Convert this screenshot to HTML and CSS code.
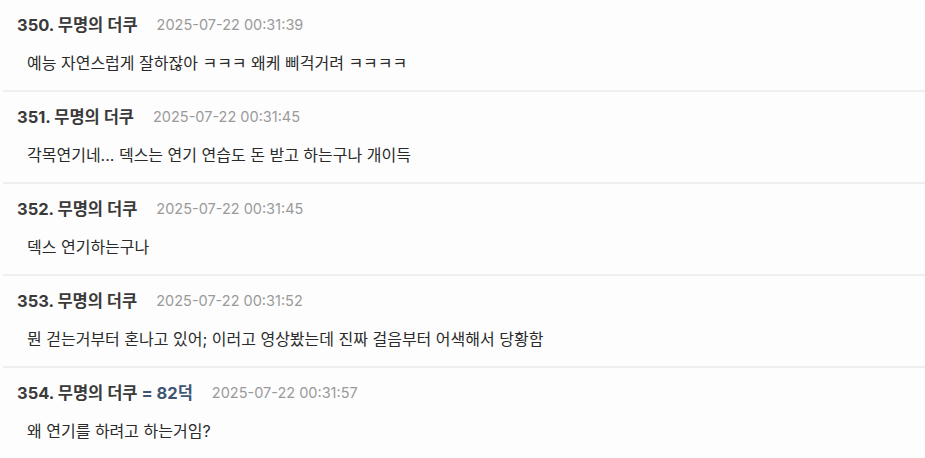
FILE: index.html
```html
<!DOCTYPE html>
<html lang="ko">
<head>
<meta charset="utf-8">
<link rel="stylesheet" href="styles.css">
</head>
<body>
<ul class="comments">
  <li class="comment">
    <div class="head"><span class="name">350. 무명의 더쿠</span><span class="time">2025-07-22 00:31:39</span></div>
    <div class="body">예능 자연스럽게 잘하잖아 ㅋㅋㅋ 왜케 삐걱거려 ㅋㅋㅋㅋ</div>
  </li>
  <li class="comment">
    <div class="head"><span class="name">351. 무명의 더쿠</span><span class="time">2025-07-22 00:31:45</span></div>
    <div class="body">각목연기네... 덱스는 연기 연습도 돈 받고 하는구나 개이득</div>
  </li>
  <li class="comment">
    <div class="head"><span class="name">352. 무명의 더쿠</span><span class="time">2025-07-22 00:31:45</span></div>
    <div class="body">덱스 연기하는구나</div>
  </li>
  <li class="comment">
    <div class="head"><span class="name">353. 무명의 더쿠</span><span class="time">2025-07-22 00:31:52</span></div>
    <div class="body">뭔 걷는거부터 혼나고 있어; 이러고 영상봤는데 진짜 걸음부터 어색해서 당황함</div>
  </li>
  <li class="comment">
    <div class="head"><span class="name">354. 무명의 더쿠 <span class="ref">= 82덕</span></span><span class="time">2025-07-22 00:31:57</span></div>
    <div class="body">왜 연기를 하려고 하는거임?</div>
  </li>
</ul>
</body>
</html>
```
FILE: styles.css
```css
html, body {
  margin: 0;
  padding: 0;
  background: #fdfdfd;
}
body {
  font-family: "Inter", "Noto Sans CJK KR", sans-serif;
  color: #333;
}
.comments {
  list-style: none;
  margin: 0 0 0 3px;
  padding: 0;
}
.comment {
  padding: 13px 0 15px 14px;
  border-bottom: 2px solid #efefef;
}
.head {
  display: flex;
  align-items: center;
  height: 24px;
  line-height: 24px;
}
.name {
  font-size: 16.5px;
  font-weight: 700;
  color: #3a3a3a;
}
.ref {
  color: #3f5573;
}
.time {
  margin-left: 19px;
  font-size: 14.5px;
  color: #9a9a9a;
}
.body {
  margin-top: 14px;
  margin-left: 10px;
  font-size: 16px;
  line-height: 24px;
  color: #2a2a2a;
}
```
